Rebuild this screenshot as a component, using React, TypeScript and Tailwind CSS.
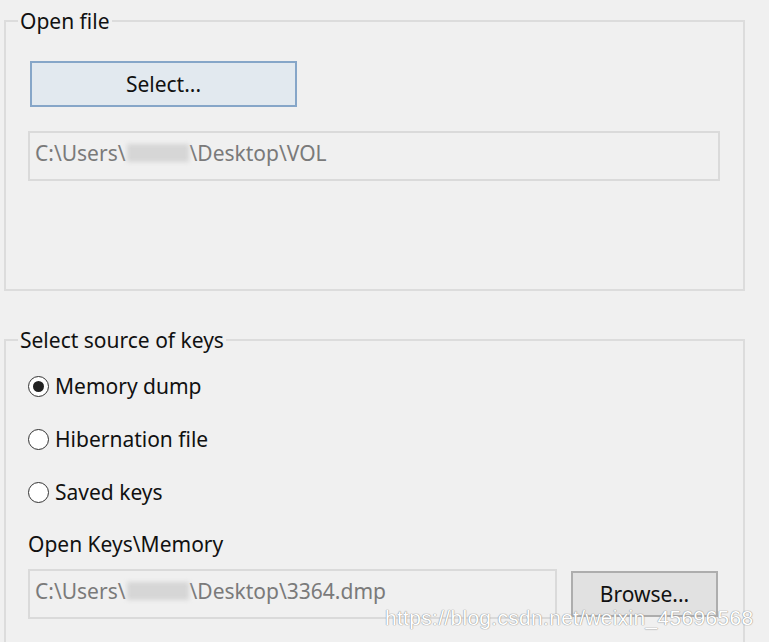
import React from 'react';

function Radio({ label, checked }: { label: string; checked?: boolean }) {
    return (
        <label className="flex items-center h-[30px] gap-[6px]">
            <span className="w-[21px] h-[21px] rounded-full border-[1.5px] border-[#333] bg-white flex items-center justify-center">
                {checked && <span className="w-[11px] h-[11px] rounded-full bg-[#222]" />}
            </span>
            <span>{label}</span>
        </label>
    );
}

function Blur() {
    return <span className="inline-block w-[62px] h-[18px] bg-[#d6d6d6] blur-[2px] align-middle mx-[1px]" />;
}

function PathBox({ rest, className }: { rest: string; className: string }) {
    return (
        <div className={`h-[50px] border-2 border-[#dadada] bg-[#f0f0f0] flex items-center pl-[5px] pb-[6px] text-[#7a7a7a] ${className}`}>
            <span>C:\Users\</span>
            <Blur />
            <span>{rest}</span>
        </div>
    );
}

export default function App() {
    return (
        <div
            className="w-[769px] h-[642px] overflow-hidden bg-[#f0f0f0] pl-[4px] text-[21px] text-[#111] leading-[26px]"
            style={{ fontFamily: '"Noto Sans", "Open Sans", sans-serif' }}
        >
            <fieldset className="mt-[8px] w-[741px] h-[283px] border-2 border-[#dcdcdc] px-[22px]">
                <legend className="px-[2px] -ml-[10px]">Open file</legend>
                <button className="mt-[27px] ml-[2px] w-[267px] h-[46px] bg-[#e2e9ef] border-2 border-[#86a6c8] flex items-center justify-center">
                    Select...
                </button>
                <PathBox rest="\Desktop\VOL" className="mt-[24px] w-[692px]" />
            </fieldset>

            <fieldset className="mt-[36px] w-[741px] h-[330px] border-2 border-[#dcdcdc] px-[22px]">
                <legend className="px-[2px] -ml-[10px]">Select source of keys</legend>
                <div className="mt-[18px] flex flex-col gap-[23px]">
                    <Radio label="Memory dump" checked />
                    <Radio label="Hibernation file" />
                    <Radio label="Saved keys" />
                </div>
                <div className="mt-[24px] h-[26px]">Open Keys\Memory</div>
                <div className="mt-[12px] flex items-center gap-[14px] relative">
                    <PathBox rest="\Desktop\3364.dmp" className="w-[529px]" />
                    <button className="w-[147px] h-[46px] bg-[#e1e1e1] border-2 border-[#adadad] flex items-center justify-center">
                        Browse...
                    </button>
                    <span
                        className="absolute left-[357px] top-[36px] text-[21px] tracking-[0.3px] text-white [text-shadow:0_0_1px_#888,0_0_1px_#888]"
                        style={{ fontFamily: '"Liberation Sans", Arial, sans-serif' }}
                    >
                        https://blog.csdn.net/weixin_45696568
                    </span>
                </div>
            </fieldset>
        </div>
    );
}
